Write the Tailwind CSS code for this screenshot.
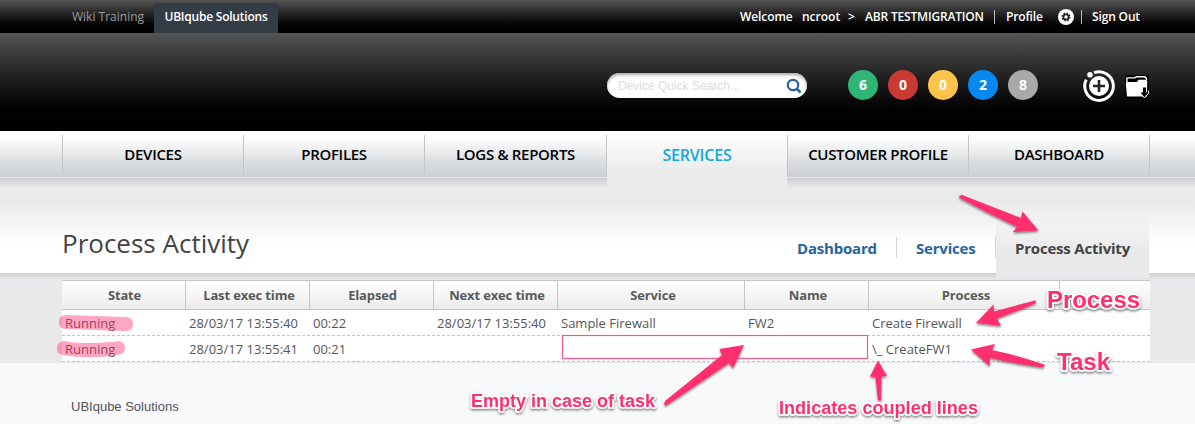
<!DOCTYPE html>
<html lang="en">
<head>
<meta charset="utf-8">
<title>Process Activity</title>
<script src="https://cdn.jsdelivr.net/npm/@tailwindcss/browser@4"></script>
</head>
<body class="relative w-[1195px] h-[424px] overflow-hidden bg-[#f8f9fb] font-['Open_Sans',sans-serif] text-[#555]">
<!-- Top bar -->
<div class="h-[33px] bg-linear-to-b from-[#555] to-black flex items-end justify-between pl-[72px] pr-[55px] text-[12px] whitespace-nowrap">
  <div class="flex items-end h-full">
    <span class="text-[#9c9c9c] leading-[30px] h-[31px] w-[82px]">Wiki Training</span>
    <span class="bg-[#343c45] text-white font-semibold h-[30px] w-[124px] leading-[27px] text-center rounded-t-[2px] tracking-[-0.22px]">UBIqube Solutions</span>
  </div>
  <div class="flex items-center h-[33px] text-white font-semibold">
    <span class="w-[62px] tracking-[-0.1px]">Welcome</span>
    <span class="w-[46px]">ncroot</span>
    <span class="w-[17px]">&gt;</span>
    <span class="w-[129px] tracking-[-0.18px]">ABR TESTMIGRATION</span>
    <span class="w-px h-[14px] bg-[#bbb] mr-[11px]"></span>
    <span class="w-[52px] tracking-[-0.15px]">Profile</span>
    <svg class="w-4 h-4" viewBox="0 0 16 16"><circle cx="8" cy="8" r="8" fill="#fff"/><circle cx="8" cy="8" r="2.6" fill="none" stroke="#222" stroke-width="1.8"/><circle cx="8" cy="8" r="3.9" fill="none" stroke="#222" stroke-width="1.3" stroke-dasharray="1.6 1.463"/></svg>
    <span class="w-px h-[14px] bg-[#bbb] ml-[7px] mr-[10px]"></span>
    <span class="w-[48px] tracking-[-0.15px]">Sign Out</span>
  </div>
</div>
<!-- Header -->
<div class="h-[98px] bg-linear-to-b from-[#555] to-black flex items-start pl-[607px]">
  <div class="mt-[40px] w-[200px] h-[25px] rounded-full bg-white flex items-center justify-between pl-[11px] pr-[5px] shadow-[inset_0_2px_3px_#aaa]">
    <span class="font-['Liberation_Sans',sans-serif] text-[12px] text-[#dcdcdc] pt-px">Device Quick Search...</span>
    <svg class="w-4 h-4" viewBox="0 0 16 16" fill="none" stroke="#26649d" stroke-width="2.2"><circle cx="7" cy="7" r="5.2"/><path d="M10.500 10.500L14.600 14.600" stroke-width="2.600"/></svg>
  </div>
  <div class="mt-[37px] ml-[41px] flex gap-[10px] text-white text-[14px] font-bold text-center leading-[30px]">
    <span class="w-[30px] h-[30px] rounded-full bg-[#2fb676]">6</span>
    <span class="w-[30px] h-[30px] rounded-full bg-[#c83a32]">0</span>
    <span class="w-[30px] h-[30px] rounded-full bg-[#ffc34b]">0</span>
    <span class="w-[30px] h-[30px] rounded-full bg-[#0588f0]">2</span>
    <span class="w-[30px] h-[30px] rounded-full bg-[#a9a9a9]">8</span>
  </div>
  <svg class="mt-[37px] ml-[45px] w-8 h-8" viewBox="0 0 32 32"><circle cx="16" cy="16" r="10" fill="#fff"/><path d="M16 10v12M10 16h12" stroke="#222" stroke-width="2.6"/><path d="M11 2.700A14.300 14.300 0 1 1 3.300 9.600" fill="none" stroke="#fff" stroke-width="3"/><circle cx="7" cy="4.700" r="2.800" fill="#fff"/></svg>
  <svg class="mt-[42px] ml-[10px] w-6 h-6" viewBox="0 0 24 24"><path fill="#000" d="M0 0h24v24H0z"/><path d="M2.500 21.500Q2 21.500 1.900 21L.8 8.500Q.8 7 2 7H12L13.500 4.800H20.500Q22.300 4.800 22.300 6.500L21.700 21.500Z" fill="#fff"/><path d="M1.900 7V3.600Q1.900 2.900 2.700 2.900H10L11.500 1.700H19.500Q21.300 1.700 21.600 5" fill="none" stroke="#fff" stroke-width="1.400"/><path d="M19.400 22.300L15.600 17.500H18V12.500H21V17.500H23.400Z" fill="#000"/><path d="M15.300 18.800L19.400 23L23.600 18.300V15.500" fill="none" stroke="#fff" stroke-width="1"/></svg>
</div>
<!-- Main navigation over the page heading gradient -->
<div class="relative z-10 h-[47px] border-b border-[#e8e8ea] bg-linear-to-b from-white from-15% via-[#dfe2e4] via-60% to-[#cbced5] flex pl-[62px] text-[15px] font-semibold text-black text-center whitespace-nowrap">
  <div class="w-[181px] h-[39px] mt-1 leading-[38px] border-l border-[#c3c5c8] tracking-[-0.3px]">DEVICES</div>
  <div class="w-[181px] h-[39px] mt-1 leading-[38px] border-l border-[#c3c5c8] tracking-[-0.3px]">PROFILES</div>
  <div class="w-[182px] h-[39px] mt-1 leading-[38px] border-l border-[#c3c5c8] tracking-[-0.3px]">LOGS &amp; REPORTS</div>
  <div class="w-px h-[39px] mt-1 bg-[#c3c5c8]"></div>
  <div class="w-[180px] h-[57px] text-[16px] text-[#0fa7e4] bg-linear-to-b from-white to-[#eaeaea] to-75% leading-[49px] tracking-[-0.2px]">SERVICES</div>
  <div class="w-[181px] h-[39px] mt-1 leading-[38px] border-l border-[#c3c5c8] tracking-[-0.3px]">CUSTOMER PROFILE</div>
  <div class="w-[181px] h-[39px] mt-1 leading-[38px] border-l border-[#c3c5c8] tracking-[-0.3px]">DASHBOARD</div>
  <div class="w-px h-[39px] mt-1 bg-[#c3c5c8]"></div>
</div>
<div class="h-[95px] bg-linear-to-b from-[#eaeaea] from-25% to-white to-70%">
  <div class="h-full bg-linear-to-b from-[#cecece] to-transparent to-[10px] flex justify-between pl-[62px] pr-[46px]">
    <h1 class="text-[26px] leading-[36px] mt-[47px] text-[#444]">Process Activity</h1>
    <div class="flex text-[15px] font-bold text-[#26649d] leading-[21px] whitespace-nowrap tracking-[-0.2px]">
      <span class="mt-[59px] w-[100px] h-[21px] leading-[23px] border-r border-[#d5d5d5]">Dashboard</span>
      <span class="mt-[59px] w-[99px] h-[21px] leading-[23px] pl-[19px] border-r border-[#d5d5d5]">Services</span>
      <span class="relative z-10 mt-[31px] w-[153px] h-[69px] pt-[28px] pl-[19px] leading-[23px] text-[#444] bg-linear-to-b from-[#ebebed]/0 to-[#e9e9eb] to-60%">Process Activity</span>
    </div>
  </div>
</div>
<!-- Process table -->
<div class="h-[90px] bg-[#e9e9eb]">
<div class="h-full pt-[7px] bg-linear-to-b from-[#cfcfcf] to-transparent to-[7px] pl-[62px]">
  <table class="w-[1088px] table-fixed border-collapse bg-white text-[13px] whitespace-nowrap">
    <colgroup><col class="w-[124px]"><col class="w-[124px]"><col class="w-[124px]"><col class="w-[124px]"><col class="w-[187px]"><col class="w-[124px]"><col class="w-[191px]"><col class="w-[90px]"></colgroup>
    <thead>
      <tr class="h-[30px] font-bold text-[#5a5a5a] tracking-[-0.15px]">
        <th class="p-0"><div class="h-[30px] leading-[29px] border-y border-r border-[#c6c6c6] bg-linear-to-b from-white to-[#ececec] pl-[2px]">State</div></th>
        <th class="p-0"><div class="h-[30px] leading-[29px] border-y border-r border-[#c6c6c6] bg-linear-to-b from-white to-[#ececec] pl-[3px]">Last exec time</div></th>
        <th class="p-0"><div class="h-[30px] leading-[29px] border-y border-r border-[#c6c6c6] bg-linear-to-b from-white to-[#ececec] pl-[2px]">Elapsed</div></th>
        <th class="p-0"><div class="h-[30px] leading-[29px] border-y border-r border-[#c6c6c6] bg-linear-to-b from-white to-[#ececec] pl-[3px]">Next exec time</div></th>
        <th class="p-0"><div class="h-[30px] leading-[29px] border-y border-r border-[#c6c6c6] bg-linear-to-b from-white to-[#ececec] pl-[4px]">Service</div></th>
        <th class="p-0"><div class="h-[30px] leading-[29px] border-y border-r border-[#c6c6c6] bg-linear-to-b from-white to-[#ececec] pl-[3px]">Name</div></th>
        <th class="p-0"><div class="h-[30px] leading-[29px] border-y border-r border-[#c6c6c6] bg-linear-to-b from-white to-[#ececec] pl-[4px]">Process</div></th>
        <th class="p-0"><div class="h-[30px] border-y border-[#c6c6c6] bg-linear-to-b from-white to-[#ececec]"></div></th>
      </tr>
    </thead>
    <tbody>
      <tr class="h-[26px]"><td class="p-0" colspan="8"><div class="h-[26px] leading-[27px] border-b border-dashed border-[#c2c2c8] flex pl-[3px]"><span class="w-[124px]">Running</span><span class="w-[124px]">28/03/17 13:55:40</span><span class="w-[124px]">00:22</span><span class="w-[124px]">28/03/17 13:55:40</span><span class="w-[187px]">Sample Firewall</span><span class="w-[124px]">FW2</span><span>Create Firewall</span></div></td></tr>
      <tr class="h-[26px]"><td class="p-0" colspan="8"><div class="h-[26px] leading-[27px] border-b border-dashed border-[#c2c2c8] flex pl-[3px]"><span class="w-[124px]">Running</span><span class="w-[124px]">28/03/17 13:55:41</span><span class="w-[559px]">00:21</span><span>\_ CreateFW1</span></div></td></tr>
    </tbody>
  </table>
</div>
</div>
<!-- Footer -->
<div class="pt-[35px] pl-[71px] font-['Liberation_Sans',sans-serif] text-[13px] leading-[18px]">UBIqube Solutions</div>
<!-- Annotations -->
<svg class="absolute inset-0 z-20" width="1195" height="424" viewBox="0 0 1195 424">
  <defs><filter id="s" x="-20%" y="-30%" width="140%" height="180%"><feDropShadow dx="0" dy="1.5" stdDeviation="1.1" flood-color="#000" flood-opacity=".5"/></filter></defs>
  <g fill="#ff2d6e" fill-opacity=".42">
    <path d="M66 315L125 317C131 317 133 320 133 324C133 329 130 331 125 331L66 329C61 329 59 326 59 322C59 318 61 315 66 315Z"/>
    <path d="M64 341C78 344 98 343 113 342C120 340 125 342 125 348C125 354 121 354 116 355C98 358 82 358 63 355C58 354 57 352 57 348C57 344 60 341 64 341Z"/>
  </g>
  <rect x="562.5" y="335.5" width="305" height="23" fill="none" stroke="#f8568a" stroke-width="1.2"/>
  <g fill="#ff2d6e" filter="url(#s)">
    <path d="M959 197.5Q959 195 962 195L1021 218L1022.500 211.500L1038.500 230.500L1013 232L1017 227L1011 224Q985 212 960 198Z"/>
    <path d="M1035 300.500Q1037 301.500 1035 303.500Q1015 312 997 318.500L1001 326L976 323L993.500 304.500L994 311.500Q1014 306 1035 300.500Z"/>
    <path d="M1044 364.500Q1045 366.500 1043 367.500Q1016 364 990 358L989.500 366L971 349.500L995 344L992 350Q1020 356 1044 364.500Z"/>
    <path d="M878 400.500L875.500 377L870 376.500L878 360.500L887 376L881.500 376.500L881 400.500Z"/>
    <path d="M664.500 405Q663.500 402 667 399.500L722 355L719.500 349L744 345L733 368L729 363Q694 387 667.500 404.500Q665 406 664.500 405Z"/>
  </g>
  <g font-family="Liberation Sans, Arial, sans-serif" font-weight="bold" fill="#ff2d6e" stroke="#fff" stroke-width="3.5" stroke-linejoin="round" paint-order="stroke" filter="url(#s)">
    <text x="1047" y="308" font-size="23" textLength="93" lengthAdjust="spacingAndGlyphs">Process</text>
    <text x="1057" y="370" font-size="23" textLength="53" lengthAdjust="spacingAndGlyphs">Task</text>
    <text x="471" y="407" font-size="18" textLength="184" lengthAdjust="spacingAndGlyphs">Empty in case of task</text>
    <text x="779" y="414" font-size="18" textLength="199" lengthAdjust="spacingAndGlyphs">Indicates coupled lines</text>
  </g>
</svg>
</body>
</html>
